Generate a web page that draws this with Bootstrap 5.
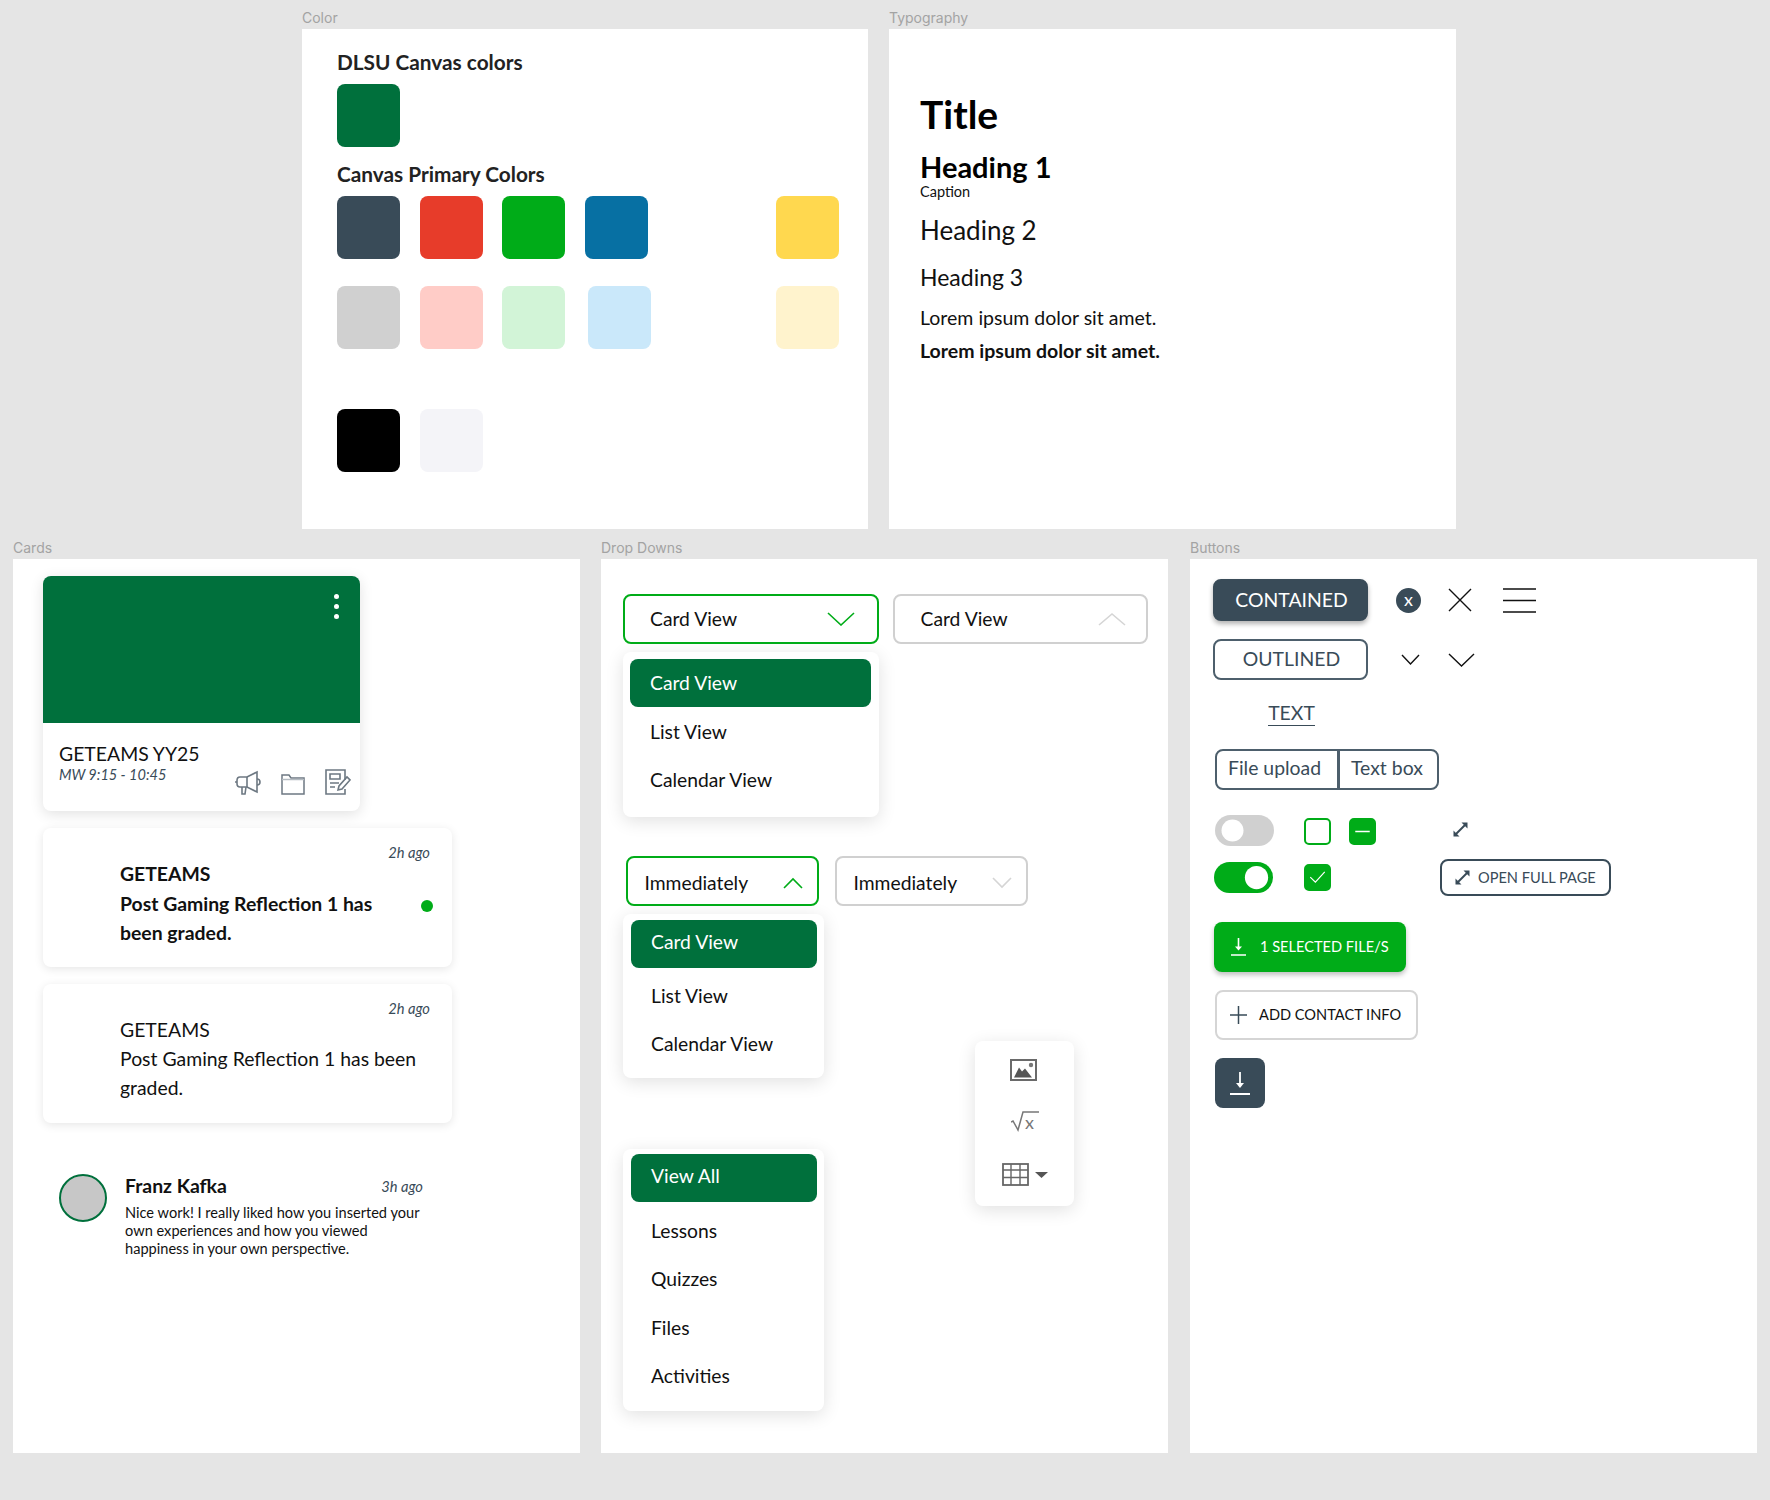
<!DOCTYPE html>
<html lang="en">
  <head>
    <meta charset="UTF-8" />
    <meta name="viewport" content="width=device-width, initial-scale=1.0" />
    <title>Canvas Style Guide</title>
    <link href="https://cdn.jsdelivr.net/npm/bootstrap@5.3.2/dist/css/bootstrap.min.css" rel="stylesheet" />
    <style>
      body {
        background: #e5e5e5;
        font-family: Lato, "Liberation Sans", sans-serif;
        color: #111;
        min-height: 1500px;
      }
      .top-row { padding-left: 302px; gap: 21px; }
      .bottom-row { padding-left: 13px; margin-top: 1px; }
      .ms-drop { margin-left: 21px; }
      .ms-btns { margin-left: 22px; }
      .frame-label {
        height: 29px;
        padding-top: 9px;
        line-height: 18px;
        font-family: Inter, "Liberation Sans", sans-serif;
        font-size: 14px;
        color: #a3a3a3;
      }
      .frame { background: #fff; width: 567px; position: relative; }
      .frame-short { height: 500px; }
      .frame-tall { height: 894px; }

      /* colour frame */
      .color-frame { width: 566px; padding: 21px 29px 0 35px; }
      .color-title { font-size: 20.8px; line-height: 24px; font-weight: 700; color: #222; margin: 0; }
      .swatch { width: 63px; height: 63px; border-radius: 8px; flex: none; }
      .swatch-row { gap: 19.6px; }
      .shift-blue { margin-left: 3px; }
      .s-green { background: #00703c; }
      .s-slate { background: #394b58; }
      .s-red { background: #e73c2a; }
      .s-lime { background: #00ac18; }
      .s-blue { background: #0770a3; }
      .s-yellow { background: #ffd84f; }
      .s-gray { background: #d0d0d0; }
      .s-pink { background: #ffccc7; }
      .s-mint { background: #d2f4d7; }
      .s-sky { background: #cae8fa; }
      .s-cream { background: #fff3cd; }
      .s-black { background: #000; }
      .s-mist { background: #f4f4f8; }
      .first-swatch { margin-top: 10px; }
      .second-title { margin-top: 15px; }
      .row-one { margin-top: 9.5px; }
      .row-two { margin-top: 27.5px; }
      .row-three { margin-top: 60px; }

      /* typography frame */
      .type-frame { padding: 62px 0 0 31px; }
      .type-title { font-size: 39px; line-height: 46px; font-weight: 700; margin: 0; color: #000; }
      .type-h1 { font-size: 29px; line-height: 34px; font-weight: 700; margin: 13px 0 0; color: #000; }
      .type-caption { font-size: 14.5px; line-height: 16px; }
      .type-h2 { font-size: 26px; line-height: 32px; font-weight: 400; margin: 14px 0 0; }
      .type-h3 { font-size: 23px; line-height: 28px; font-weight: 400; margin: 17px 0 0; }
      .type-body { font-size: 19.5px; line-height: 24px; margin-top: 15px; }
      .type-bold { font-size: 19.5px; line-height: 24px; margin-top: 9px; font-weight: 700; }

      /* cards frame */
      .cards-frame { padding: 17px 0 0 30px; }
      .course-card { width: 317px; height: 235px; border-radius: 8px; box-shadow: 0 3px 14px rgba(0, 0, 0, 0.12); }
      .course-top { height: 147px; background: #00703c; border-radius: 8px 8px 0 0; padding: 18px 21px 0 0; }
      .course-body { height: 88px; padding: 19px 9px 16px 16px; }
      .course-name { font-size: 19.4px; line-height: 24px; }
      .course-time { font-size: 14.5px; line-height: 18px; font-style: italic; color: #394b58; }
      .course-icons { gap: 20px; }
      .notice-card { width: 409px; height: 139px; margin-top: 17px; border-radius: 8px; padding: 17px 22px 0 77px; box-shadow: 0 2px 10px rgba(0, 0, 0, 0.1); }
      .notice-time { font-size: 14.7px; line-height: 14px; font-style: italic; color: #394b58; }
      .notice-title { font-size: 19.4px; line-height: 26px; margin-top: 2px; margin-bottom: 1px; }
      .notice-strong .notice-title { margin-bottom: 2px; }
      .notice-lines { width: 300px; }
      .notice-text { font-size: 19.4px; line-height: 29px; width: 300px; }
      .notice-dot { width: 12px; height: 12px; border-radius: 50%; background: #00ac18; margin: 6px 0 0 1px; flex: none; }
      .comment-row { margin: 51px 0 0 16px; gap: 18px; }
      .comment-avatar { width: 48px; height: 48px; border-radius: 50%; background: #c7c7c7; border: 2px solid #00703c; flex: none; }
      .comment-col { width: 298px; }
      .comment-name { font-size: 19.4px; line-height: 24px; }
      .comment-time { font-size: 14.7px; font-style: italic; color: #394b58; }
      .comment-text { font-size: 14.6px; line-height: 18px; margin-top: 6px; }

      /* drop downs frame */
      .drop-frame { padding: 35px 0 0 21.5px; }
      .select-pair { gap: 14.5px; }
      .select-btn {
        font-size: 19.3px;
        color: #111;
        background: #fff;
        border: 2px solid #d0d0d0;
        border-radius: 8px;
        display: flex;
        align-items: center;
        justify-content: space-between;
      }
      .select-on { border-color: #00ac18; }
      .select-wide { width: 256px; height: 50px; padding: 0 22px 0 25.5px; }
      .select-wide-alt { width: 255px; padding-right: 20px; }
      .select-narrow { width: 193px; height: 50px; padding: 4px 14px 0 17px; }
      .menu-box {
        --bs-dropdown-link-active-bg: #00703c;
        --bs-dropdown-link-color: #111;
        position: static;
        border: 0;
        border-radius: 8px;
        box-shadow: 0 4px 18px rgba(0, 0, 0, 0.12);
        min-width: 0;
        font-size: 19.3px;
      }
      .menu-box .dropdown-item { height: 47.5px; line-height: 47.5px; padding: 0 0 0 20.5px; border-radius: 8px; }
      .menu-box .dropdown-item.active { height: 48px; line-height: 48px; }
      .menu-one { width: 256px; height: 165px; margin-top: 8px; padding: 7px 8px 0 7px; }
      .menu-one .dropdown-item.active { margin-bottom: 1px; }
      .menu-two { width: 201px; height: 164px; margin-top: 8px; padding: 6px 7px 0 8px; }
      .menu-two .dropdown-item.active { margin-bottom: 4px; line-height: 44px; }
      .menu-three { width: 201px; height: 262px; margin-top: 71px; padding: 5px 7px 0 8px; }
      .menu-three .dropdown-item { height: 48px; margin-bottom: 0.5px; }
      .menu-three .dropdown-item.active { margin-bottom: 4.5px; line-height: 44px; }
      .select-row-two { margin: 39px 0 0 3px; gap: 16px; }
      .tool-menu {
        position: absolute;
        left: 374px;
        top: 482px;
        width: 99px;
        height: 165px;
        background: #fff;
        border-radius: 8px;
        box-shadow: 0 4px 18px rgba(0, 0, 0, 0.12);
        padding-top: 18px;
      }
      .tool-image { margin-left: -2px; }
      .tool-root { margin-top: 30px; margin-bottom: -4px; }
      .tool-table { margin-top: 32px; gap: 6px; margin-left: 1px; }

      /* buttons frame */
      .btn-frame { padding: 20px 0 0 23px; }
      .solid-btn {
        width: 155px; height: 42px; padding: 0 0 0 2px;
        font-size: 19.4px; line-height: 38px; color: #fff;
        background: #394b58; border: 2px solid #394b58; border-radius: 8px;
        box-shadow: 0 3px 5px rgba(0, 0, 0, 0.3);
      }
      .line-btn {
        width: 155px; height: 41px; padding: 0 0 1px 2px;
        font-size: 19.4px; line-height: 36px; color: #394b58;
        background: #fff; border: 2px solid #4d5f6c; border-radius: 8px;
      }
      .x-circle {
        width: 25px; height: 25px; border-radius: 50%;
        background: #394b58; color: #fff;
        font-size: 18px; line-height: 23px; text-align: center;
        margin-left: 28px;
      }
      .icon-close { margin-left: 27px; }
      .icon-menu { margin-left: 31px; }
      .outlined-row { margin-top: 18px; }
      .chev-small { margin-left: 33px; }
      .chev-big { margin-left: 28px; }
      .text-link-wrap { width: 155px; margin-top: 21px; padding-left: 2px; text-align: center; }
      .text-link { display: inline-block; font-size: 19.4px; line-height: 24px; color: #394b58; border-bottom: 1px solid #394b58; text-decoration: none; }
      .field-group { margin: 23px 0 0 2px; width: 224px; height: 41px; }
      .field-group .btn {
        font-size: 19.4px; color: #394b58; background: #fff;
        border: 2px solid #4d5f6c; padding: 0 0 4px 11px; text-align: left;
      }
      .field-group .btn:first-child { width: 124px; flex: none; border-radius: 8px 0 0 8px; }
      .field-group .btn:last-child { border-radius: 0 8px 8px 0; }
      .form-switch.switch-wrap { padding-left: 0; margin: 0; min-height: 0; line-height: 0; }
      .form-switch .switch-input {
        --bs-form-switch-bg: url("data:image/svg+xml,%3csvg xmlns='http://www.w3.org/2000/svg' viewBox='-4 -4 8 8'%3e%3ccircle r='2.84' fill='%23fff'/%3e%3c/svg%3e");
        width: 59px; height: 31px; margin: 0; float: none;
        border: 0; background-color: #d0d0d0; background-position: 2px center;
      }
      .form-switch .switch-input:checked { background-color: #00ac18; background-position: calc(100% - 1px) center; }
      .form-check-input.check-box { width: 27px; height: 27px; float: none; border: 2px solid #00ac18; border-radius: 5px; flex: none; }
      .form-check-input.box-a { margin: 3px 0 0 30px; }
      .form-check-input.box-b { margin: 3px 0 0 18px; }
      .form-check-input.box-c { margin: 0 0 0 31px; }
      .form-check-input.check-box:checked {
        background-color: #00ac18;
        --bs-form-check-bg-image: url("data:image/svg+xml,%3csvg xmlns='http://www.w3.org/2000/svg' viewBox='0 0 27 27'%3e%3cpath fill='none' stroke='%23fff' stroke-width='1.4' d='M5 13l6 6 11-12'/%3e%3c/svg%3e");
        background-size: 100%;
      }
      .form-check-input.check-box:indeterminate {
        background-color: #00ac18;
        border-color: #00ac18;
        --bs-form-check-bg-image: url("data:image/svg+xml,%3csvg xmlns='http://www.w3.org/2000/svg' viewBox='0 0 27 27'%3e%3cpath fill='none' stroke='%23fff' stroke-width='1.6' d='M5 13.5h17'/%3e%3c/svg%3e");
        background-size: 100%;
      }
      .control-row-one { margin: 25px 0 0 2px; height: 31px; }
      .control-row-two { margin: 13px 0 0 1px; height: 37px; }
      .expand-lone { margin: 7px 0 0 77px; }
      .open-btn {
        width: 171px; height: 37px; padding: 0 0 0 13px; margin-left: 109px;
        font-size: 14.6px; color: #394b58; background: #fff;
        border: 2px solid #394b58; border-radius: 8px; gap: 8px;
      }
      .files-btn {
        width: 192px; height: 50px; padding: 0 0 0 17px; margin: 26px 0 0 1px;
        font-size: 14.6px; color: #fff; background: #00ac18;
        border: 0; border-radius: 8px; gap: 14px;
        box-shadow: 0 3px 5px rgba(0, 0, 0, 0.25);
      }
      .add-btn {
        width: 203px; height: 50px; padding: 0 0 0 13px; margin: 18px 0 0 2px;
        font-size: 14.6px; color: #111; background: #fff;
        border: 2px solid #d5d5d5; border-radius: 8px; gap: 12px;
      }
      .save-btn {
        width: 50px; height: 50px; padding: 0; margin: 18px 0 0 2px;
        background: #394b58; border: 0; border-radius: 8px;
      }
    </style>
  </head>
  <body>
    <div class="d-flex top-row">
      <div>
        <div class="frame-label">Color</div>
        <div class="frame frame-short color-frame">
          <h2 class="color-title">DLSU Canvas colors</h2>
          <div class="swatch s-green first-swatch"></div>
          <h2 class="color-title second-title">Canvas Primary Colors</h2>
          <div class="d-flex swatch-row row-one">
            <div class="swatch s-slate"></div>
            <div class="swatch s-red"></div>
            <div class="swatch s-lime"></div>
            <div class="swatch s-blue"></div>
            <div class="swatch s-yellow ms-auto"></div>
          </div>
          <div class="d-flex swatch-row row-two">
            <div class="swatch s-gray"></div>
            <div class="swatch s-pink"></div>
            <div class="swatch s-mint"></div>
            <div class="swatch s-sky shift-blue"></div>
            <div class="swatch s-cream ms-auto"></div>
          </div>
          <div class="d-flex swatch-row row-three">
            <div class="swatch s-black"></div>
            <div class="swatch s-mist"></div>
          </div>
        </div>
      </div>
      <div>
        <div class="frame-label">Typography</div>
        <div class="frame frame-short type-frame">
          <h1 class="type-title">Title</h1>
          <h2 class="type-h1">Heading 1</h2>
          <div class="type-caption">Caption</div>
          <h3 class="type-h2">Heading 2</h3>
          <h4 class="type-h3">Heading 3</h4>
          <div class="type-body">Lorem ipsum dolor sit amet.</div>
          <div class="type-bold">Lorem ipsum dolor sit amet.</div>
        </div>
      </div>
    </div>

    <div class="d-flex bottom-row">
      <div>
        <div class="frame-label">Cards</div>
        <div class="frame frame-tall cards-frame">
          <div class="card border-0 course-card">
            <div class="course-top d-flex justify-content-end align-items-start">
              <svg width="5" height="27" viewBox="0 0 5 27"><circle cx="2.5" cy="2.5" r="2.5" fill="#fff" /><circle cx="2.5" cy="12.5" r="2.5" fill="#fff" /><circle cx="2.5" cy="22.5" r="2.5" fill="#fff" /></svg>
            </div>
            <div class="course-body d-flex justify-content-between">
              <div>
                <div class="course-name">GETEAMS YY25</div>
                <div class="course-time">MW 9:15 - 10:45</div>
              </div>
              <div class="course-icons d-flex align-items-end">
                <svg width="26" height="25" viewBox="0 0 26 25" fill="none" stroke="#6d7882" stroke-width="1.6"><path d="M2 10.5C2 8.5 3 7 5 7h7l10-5v20l-10-5H5c-2 0-3-1.5-3-3.5z" /><path d="M12 7v10M0 12h2M22 9c2 0 3 1.5 3 3s-1 3-3 3M7 17v7h3l1-7" /></svg>
                <svg width="24" height="21" viewBox="0 0 24 21" fill="none" stroke="#6d7882" stroke-width="1.5"><path d="M1 20V1h7l2 3h13v16z" /><path d="M1 5.5h22" stroke="#b4bbc1" /></svg>
                <svg width="26" height="26" viewBox="0 0 26 26" fill="none" stroke="#6d7882" stroke-width="1.6"><path d="M20 11V1H1v24h19v-5" /><path d="M5 5h10v5H5zM5 14h9M5 18h5" /><path d="M13 21l1-4 8-9 3 3-8 9z" /></svg>
              </div>
            </div>
          </div>

          <div class="card border-0 notice-card">
            <div class="notice-time text-end">2h ago</div>
            <div class="d-flex align-items-center">
              <div class="fw-bold notice-lines notice-strong">
                <div class="notice-title">GETEAMS</div>
                <div class="notice-text">Post Gaming Reflection 1 has<br />been graded.</div>
              </div>
              <div class="notice-dot"></div>
            </div>
          </div>

          <div class="card border-0 notice-card">
            <div class="notice-time text-end">2h ago</div>
            <div class="notice-title">GETEAMS</div>
            <div class="notice-text">Post Gaming Reflection 1 has been graded.</div>
          </div>

          <div class="d-flex comment-row">
            <div class="comment-avatar"></div>
            <div class="comment-col">
              <div class="d-flex justify-content-between align-items-center">
                <div class="comment-name fw-bold">Franz Kafka</div>
                <div class="comment-time">3h ago</div>
              </div>
              <div class="comment-text">Nice work! I really liked how you inserted your own experiences and how you viewed happiness in your own perspective.</div>
            </div>
          </div>
        </div>
      </div>

      <div class="ms-drop">
        <div class="frame-label">Drop Downs</div>
        <div class="frame frame-tall drop-frame">
          <div class="d-flex select-pair">
            <button class="btn select-btn select-on select-wide">Card View
              <svg width="28" height="14" viewBox="0 0 28 14" fill="none" stroke="#00ac18" stroke-width="1.6"><path d="M1 1l13 12L27 1" /></svg>
            </button>
            <button class="btn select-btn select-wide select-wide-alt">Card View
              <svg width="28" height="14" viewBox="0 0 28 14" fill="none" stroke="#d5d5d5" stroke-width="1.6"><path d="M1 13L14 2l13 11" /></svg>
            </button>
          </div>
          <div class="dropdown-menu show menu-box menu-one">
            <a class="dropdown-item active" href="#">Card View</a>
            <a class="dropdown-item" href="#">List View</a>
            <a class="dropdown-item" href="#">Calendar View</a>
          </div>

          <div class="d-flex select-row-two">
            <button class="btn select-btn select-on select-narrow">Immediately
              <svg width="20" height="12" viewBox="0 0 20 12" fill="none" stroke="#00ac18" stroke-width="1.6"><path d="M1 11l9-9 9 9" /></svg>
            </button>
            <button class="btn select-btn select-narrow">Immediately
              <svg width="20" height="12" viewBox="0 0 20 12" fill="none" stroke="#d5d5d5" stroke-width="1.6"><path d="M1 1l9 9 9-9" /></svg>
            </button>
          </div>
          <div class="dropdown-menu show menu-box menu-two">
            <a class="dropdown-item active" href="#">Card View</a>
            <a class="dropdown-item" href="#">List View</a>
            <a class="dropdown-item" href="#">Calendar View</a>
          </div>

          <div class="dropdown-menu show menu-box menu-three">
            <a class="dropdown-item active" href="#">View All</a>
            <a class="dropdown-item" href="#">Lessons</a>
            <a class="dropdown-item" href="#">Quizzes</a>
            <a class="dropdown-item" href="#">Files</a>
            <a class="dropdown-item" href="#">Activities</a>
          </div>

          <div class="tool-menu d-flex flex-column align-items-center">
            <svg class="tool-image" width="27" height="22" viewBox="0 0 27 22"><rect x="1" y="1" width="25" height="20" fill="#fff" stroke="#6a6a6a" stroke-width="2" /><path d="M4 18.500l5-10 3 4 3-3 7 9z" fill="#555" /><circle cx="21" cy="6" r="2.200" fill="#777" /></svg>
            <svg class="tool-root" width="28" height="24" viewBox="0 0 28 24" fill="none" stroke="#777" stroke-width="1.5"><path d="M0 11l2-1 5 9 5-18h16" /><text x="14" y="18" font-family="Lato, sans-serif" font-size="18" fill="#777" stroke="none">x</text></svg>
            <div class="tool-table d-flex align-items-center">
              <svg width="27" height="23" viewBox="0 0 27 23" fill="none" stroke="#666" stroke-width="1.4"><rect x="1" y="1" width="25" height="21" stroke-width="1.8" /><path d="M1 7h25M1 14.5h25M9 1v21M18 1v21" /></svg>
              <svg width="13" height="6" viewBox="0 0 13 6"><path d="M0 0h13L6.5 6z" fill="#555" /></svg>
            </div>
          </div>
        </div>
      </div>

      <div class="ms-btns">
        <div class="frame-label">Buttons</div>
        <div class="frame frame-tall btn-frame">
          <div class="d-flex align-items-center">
            <button class="btn solid-btn">CONTAINED</button>
            <div class="x-circle">x</div>
            <svg class="icon-close" width="24" height="24" viewBox="0 0 24 24" fill="none" stroke="#111" stroke-width="1.4"><path d="M1 1l22 22M23 1L1 23" /></svg>
            <svg class="icon-menu" width="33" height="25" viewBox="0 0 33 25" fill="none" stroke="#111" stroke-width="1.4"><path d="M0 1h33M0 12.5h33M0 24h33" /></svg>
          </div>
          <div class="d-flex align-items-center outlined-row">
            <button class="btn line-btn">OUTLINED</button>
            <svg class="chev-small" width="19" height="11" viewBox="0 0 19 11" fill="none" stroke="#111" stroke-width="1.4"><path d="M1 1l8.5 9L18 1" /></svg>
            <svg class="chev-big" width="27" height="14" viewBox="0 0 27 14" fill="none" stroke="#111" stroke-width="1.4"><path d="M1 1l12.5 12L26 1" /></svg>
          </div>
          <div class="text-link-wrap"><a class="text-link" href="#">TEXT</a></div>
          <div class="btn-group field-group">
            <button class="btn">File upload</button>
            <button class="btn">Text box</button>
          </div>

          <div class="d-flex align-items-start control-row-one">
            <div class="form-check form-switch switch-wrap"><input class="form-check-input switch-input" type="checkbox" role="switch" /></div>
            <input class="form-check-input check-box box-a" type="checkbox" />
            <input class="form-check-input check-box box-b" id="mixed-box" type="checkbox" />
            <svg class="expand-lone" width="15" height="15" viewBox="0 0 15 15"><path d="M3 12L12 3" stroke="#394b58" stroke-width="2" /><path d="M8.5.5h6v6zM.5 8.5v6h6z" fill="#394b58" /></svg>
          </div>
          <div class="d-flex align-items-center control-row-two">
            <div class="form-check form-switch switch-wrap"><input class="form-check-input switch-input" type="checkbox" role="switch" checked /></div>
            <input class="form-check-input check-box box-c" type="checkbox" checked />
            <button class="btn open-btn d-flex align-items-center">
              <svg width="15" height="15" viewBox="0 0 15 15"><path d="M3 12L12 3" stroke="#394b58" stroke-width="2" /><path d="M8.5.5h6v6zM.5 8.5v6h6z" fill="#394b58" /></svg>
              OPEN FULL PAGE
            </button>
          </div>

          <button class="btn files-btn d-flex align-items-center">
            <svg width="15" height="18" viewBox="0 0 15 18" fill="none" stroke="#fff" stroke-width="1.6"><path d="M7.5 0v11M0 17h15" /><path d="M4 8.5l3.5 4 3.5-4z" fill="#fff" stroke="none" /></svg>
            1 SELECTED FILE/S
          </button>
          <button class="btn add-btn d-flex align-items-center">
            <svg width="17" height="18" viewBox="0 0 17 18" fill="none" stroke="#394b58" stroke-width="1.5"><path d="M8.5 0v18M0 9h17" /></svg>
            ADD CONTACT INFO
          </button>
          <button class="btn save-btn d-flex align-items-center justify-content-center">
            <svg width="20" height="23" viewBox="0 0 20 23" fill="none" stroke="#fff" stroke-width="1.8"><path d="M10 0v14M0 22h20" /><path d="M6 11l4 5 4-5z" fill="#fff" stroke="none" /></svg>
          </button>
        </div>
      </div>
    </div>

    <script src="https://cdn.jsdelivr.net/npm/bootstrap@5.3.2/dist/js/bootstrap.bundle.min.js"></script>
    <script>
      document.getElementById("mixed-box").indeterminate = true;
    </script>
  </body>
</html>
